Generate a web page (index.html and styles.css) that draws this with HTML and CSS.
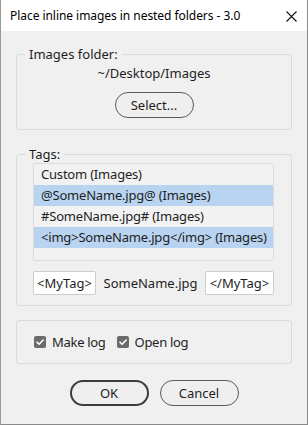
FILE: index.html
```html
<!DOCTYPE html>
<html>
<head>
<meta charset="utf-8">
<link rel="stylesheet" href="styles.css">
</head>
<body>
<div class="window">
  <div class="titlebar">
    <span class="title">Place inline images in nested folders - 3.0</span>
    <svg class="close" width="11" height="11" viewBox="0 0 11 11"><path d="M0.5 0.5 L10.5 10.5 M10.5 0.5 L0.5 10.5" stroke="#111" stroke-width="1.1" fill="none"/></svg>
  </div>
  <div class="content">
    <fieldset class="panel panel-folder">
      <legend>Images folder:</legend>
      <div class="path">~/Desktop/Images</div>
      <div class="center"><button class="btn">Select...</button></div>
    </fieldset>

    <fieldset class="panel panel-tags">
      <legend>Tags:</legend>
      <div class="tags-body">
        <div class="list">
          <div class="row">Custom (Images)</div>
          <div class="row sel">@SomeName.jpg@ (Images)</div>
          <div class="row">#SomeName.jpg# (Images)</div>
          <div class="row sel">&lt;img&gt;SomeName.jpg&lt;/img&gt; (Images)</div>
        </div>
        <div class="tagrow">
          <div class="field f-open">&lt;MyTag&gt;</div>
          <div class="fname">SomeName.jpg</div>
          <div class="field f-close">&lt;/MyTag&gt;</div>
        </div>
      </div>
    </fieldset>

    <div class="panel panel-log">
      <label class="check"><span class="box"><svg width="12" height="12" viewBox="0 0 12 12"><path d="M3 6.2 L5.1 8.3 L9.2 4" stroke="#fff" stroke-width="1.6" fill="none" stroke-linecap="round" stroke-linejoin="round"/></svg></span>Make log</label>
      <label class="check"><span class="box"><svg width="12" height="12" viewBox="0 0 12 12"><path d="M3 6.2 L5.1 8.3 L9.2 4" stroke="#fff" stroke-width="1.6" fill="none" stroke-linecap="round" stroke-linejoin="round"/></svg></span>Open log</label>
    </div>

    <div class="buttons">
      <button class="btn btn-default">OK</button>
      <button class="btn">Cancel</button>
    </div>
  </div>
</div>
</body>
</html>
```
FILE: styles.css
```css
html, body {
  margin: 0;
  padding: 0;
}
body {
  width: 308px;
  height: 425px;
  overflow: hidden;
  font-family: "Noto Sans", "Open Sans", sans-serif;
  font-size: 13px;
  color: #1e1e1e;
}
.window {
  width: 308px;
  height: 425px;
  box-sizing: border-box;
  background: #f0f0f0;
  border-left: 1px solid #9a9a9a;
  border-right: 1px solid #8a8a8a;
  border-bottom: 1px solid #8a8a8a;
  display: flex;
  flex-direction: column;
}
.titlebar {
  height: 31px;
  background: #ffffff;
  display: flex;
  align-items: center;
  justify-content: space-between;
  padding: 0 10px 0 9px;
  flex-shrink: 0;
}
.title {
  font-size: 12px;
  color: #000;
  letter-spacing: -0.05px;
}
.close {
  display: block;
  margin-top: 1px;
}
.content {
  padding: 14px 15px 0 15px;
  display: flex;
  flex-direction: column;
}
.panel {
  margin: 0;
  border: 1px solid #dadada;
  border-radius: 3px;
  min-width: 0;
}
fieldset.panel {
  padding: 0;
}
legend {
  margin-left: 8px;
  padding: 0 4px;
  line-height: 18px;
  font-size: 13px;
}
fieldset.panel-folder {
  padding: 0 0 11px 0;
}
.path {
  text-align: center;
  line-height: 18px;
  margin-top: 1px;
}
.center {
  display: flex;
  justify-content: center;
  margin-top: 10px;
}
.btn {
  font-family: inherit;
  font-size: 13px;
  color: #1e1e1e;
  background: #efefef;
  border: 1px solid #5a5a5a;
  border-radius: 13px;
  height: 26px;
  width: 79px;
  padding: 0;
  line-height: 22px;
}
.btn-default {
  border: 2px solid #3c3c3c;
}
fieldset.panel-tags {
  margin-top: 15px;
  padding: 0 0 10px 0;
}
.tags-body {
  padding: 0 17px 0 16px;
}
.list {
  height: 98px;
  box-sizing: border-box;
  border: 1px solid #dcdcdc;
  border-radius: 2px;
  background: #f2f2f2;
}
.row {
  height: 21px;
  line-height: 21px;
  padding-left: 7px;
  white-space: nowrap;
  letter-spacing: -0.2px;
}
.row.sel {
  background: #b8d4f0;
}
.tagrow {
  display: flex;
  align-items: center;
  justify-content: space-between;
  margin-top: 10px;
}
.field {
  height: 24px;
  box-sizing: border-box;
  background: #fff;
  border: 1px solid #cdcdcd;
  border-radius: 2px;
  line-height: 22px;
  text-align: center;
}
.f-open { width: 63px; }
.f-close { width: 69px; }
.fname {
  line-height: 22px;
}
.panel-log {
  margin-top: 14px;
  height: 44px;
  box-sizing: border-box;
  display: flex;
  align-items: center;
  gap: 11px;
  padding-left: 17px;
}
.check {
  display: flex;
  align-items: center;
  gap: 6px;
  letter-spacing: -0.3px;
}
.box {
  width: 12px;
  height: 12px;
  border-radius: 2px;
  background: #6b6b6b;
  display: block;
}
.box svg { display: block; }
.buttons {
  display: flex;
  justify-content: center;
  gap: 11px;
  margin-top: 16px;
}
```
